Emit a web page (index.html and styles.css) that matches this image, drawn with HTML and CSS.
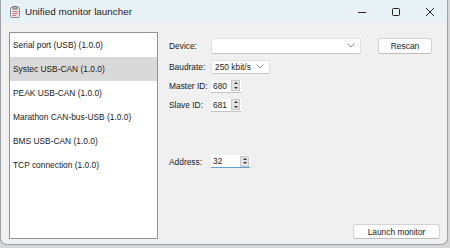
FILE: index.html
```html
<!DOCTYPE html>
<html lang="en">
<head>
  <meta charset="UTF-8" />
  <title>Unified monitor launcher</title>
  <link rel="stylesheet" href="styles.css">
</head>
<body>
  <div class="window">
    <!-- Title bar -->
    <div class="titlebar">
      <svg class="app-icon" width="10" height="12" viewBox="0 0 10 12">
        <rect x="0.5" y="1.5" width="9" height="10" rx="1" fill="#e9e4e4" stroke="#8a8a8a"/>
        <rect x="2.5" y="0.5" width="5" height="2.5" rx="0.5" fill="#b9b9b9" stroke="#777"/>
        <line x1="2.5" y1="5.5" x2="7.5" y2="5.5" stroke="#d0707a"/>
        <line x1="2.5" y1="7.5" x2="7.5" y2="7.5" stroke="#d0707a"/>
        <line x1="2.5" y1="9.5" x2="6" y2="9.5" stroke="#d0707a"/>
      </svg>
      <span class="title">Unified monitor launcher</span>
      <div class="controls">
        <span class="ctl"><svg width="10" height="10" viewBox="0 0 10 10"><line x1="1" y1="5.5" x2="9" y2="5.5" stroke="#222" stroke-width="1"/></svg></span>
        <span class="ctl"><svg width="10" height="10" viewBox="0 0 10 10"><rect x="1.5" y="1.5" width="7" height="7" rx="1" fill="none" stroke="#222"/></svg></span>
        <span class="ctl"><svg width="10" height="10" viewBox="0 0 10 10"><path d="M1 1 L9 9 M9 1 L1 9" stroke="#222" stroke-width="1"/></svg></span>
      </div>
    </div>

    <div class="client">
      <!-- Plugin list -->
      <ul class="plugin-list">
        <li>Serial port (USB) (1.0.0)</li>
        <li class="selected">Systec USB-CAN (1.0.0)</li>
        <li>PEAK USB-CAN (1.0.0)</li>
        <li>Marathon CAN-bus-USB (1.0.0)</li>
        <li>BMS USB-CAN (1.0.0)</li>
        <li>TCP connection (1.0.0)</li>
      </ul>

      <!-- Settings panel -->
      <div class="settings">
        <div class="row row-device">
          <label>Device:</label>
          <div class="combo combo-device">
            <span class="combo-text"></span>
            <svg class="chevron" width="8" height="5" viewBox="0 0 8 5"><polyline points="0.5,0.5 4,4 7.5,0.5" fill="none" stroke="#8a8a8a"/></svg>
          </div>
          <button class="btn btn-rescan">Rescan</button>
        </div>
        <div class="row row-baud">
          <label>Baudrate:</label>
          <div class="combo combo-baud">
            <span class="combo-text">250 kbit/s</span>
            <svg class="chevron" width="8" height="5" viewBox="0 0 8 5"><polyline points="0.5,0.5 4,4 7.5,0.5" fill="none" stroke="#8a8a8a"/></svg>
          </div>
        </div>
        <div class="row row-master">
          <label>Master ID:</label>
          <div class="spin spin-small">
            <span class="spin-text">680</span>
            <span class="spin-btns"><span class="up"></span><span class="down"></span></span>
          </div>
        </div>
        <div class="row row-slave">
          <label>Slave ID:</label>
          <div class="spin spin-small">
            <span class="spin-text">681</span>
            <span class="spin-btns"><span class="up"></span><span class="down"></span></span>
          </div>
        </div>
        <div class="row row-address">
          <label>Address:</label>
          <div class="spin spin-wide focused">
            <span class="spin-text">32</span>
            <span class="spin-btns"><span class="up"></span><span class="down"></span></span>
          </div>
        </div>
        <div class="actions">
          <button class="btn btn-launch">Launch monitor</button>
        </div>
      </div>
    </div>
  </div>
</body>
</html>
```

FILE: styles.css
```css
/* Desktop behind the window */
body {
  margin: 0;
  width: 450px;
  height: 248px;
  background: #d6d6d6;
  font-family: 'Liberation Sans', Arial, sans-serif;
  font-size: 8.4px;
  color: #1a1a1a;
  overflow: hidden;
}
/* Window frame */
.window {
  width: 448px;
  height: 245px;
  background: #f0f0f0;
  border: 1px solid #9da3a6;
  border-top: none;
  border-radius: 0 0 7px 7px;
  box-sizing: border-box;
  display: flex;
  flex-direction: column;
  overflow: hidden;
}
/* Title bar */
.titlebar {
  height: 23px;
  background: #e8f2f6;
  display: flex;
  align-items: center;
  flex-shrink: 0;
}
.app-icon {
  margin-left: 9px;
  margin-top: 1px;
}
.title {
  margin-left: 5px;
  font-size: 9.9px;
  color: #1c1c1c;
}
.controls {
  margin-left: auto;
  display: flex;
}
.ctl {
  width: 34px;
  height: 23px;
  display: flex;
  align-items: center;
  justify-content: center;
}
/* Main area */
.client {
  flex: 1;
  display: flex;
  padding: 9px 0 6px 8px;
}
.plugin-list {
  list-style: none;
  margin: 0;
  padding: 0;
  width: 149px;
  height: 207px;
  background: #fff;
  border: 1px solid #8f959b;
  box-sizing: border-box;
}
.plugin-list li {
  height: 24px;
  line-height: 24px;
  padding-left: 3px;
  white-space: nowrap;
}
.plugin-list li.selected {
  background: #d9d9d9;
}
/* Settings panel */
.settings {
  flex: 1;
  margin-left: 11px;
  display: flex;
  flex-direction: column;
}
.row {
  display: flex;
  align-items: center;
}
.row label {
  width: 42px;
  flex-shrink: 0;
}
.row-device {
  margin-top: 5px;
  height: 17px;
}
.row-baud {
  margin-top: 5px;
  height: 15px;
}
.row-master {
  margin-top: 5px;
  height: 14px;
}
.row-slave {
  margin-top: 5px;
  height: 14px;
}
.row-address {
  margin-top: 43px;
  height: 13px;
}
/* Combo boxes */
.combo {
  height: 15px;
  background: #fff;
  border: 1px solid #e1e1e1;
  border-bottom-color: #c4c4c4;
  border-radius: 2px;
  box-sizing: border-box;
  display: flex;
  align-items: center;
  padding: 0 5px 0 3px;
}
.combo-device {
  width: 150px;
  height: 16px;
}
.combo-baud {
  width: 59px;
  height: 14px;
}
.combo-text {
  flex: 1;
}
.chevron {
  flex-shrink: 0;
}
/* Buttons */
.btn {
  font-family: inherit;
  font-size: inherit;
  color: #1a1a1a;
  background: #fdfdfd;
  border: 1px solid #d3d3d3;
  border-bottom-color: #bcbcbc;
  border-radius: 3px;
  padding: 0;
  box-sizing: border-box;
}
.btn-rescan {
  width: 54px;
  height: 16px;
  margin-left: 17px;
}
.actions {
  margin-top: auto;
  display: flex;
  justify-content: flex-end;
  margin-right: 7px;
}
.btn-launch {
  width: 87px;
  height: 15px;
}
/* Spin boxes */
.spin {
  height: 13px;
  background: #fff;
  border-bottom: 1px solid #c4c4c4;
  box-sizing: border-box;
  display: flex;
  align-items: center;
  padding-left: 2px;
}
.spin-small {
  width: 30px;
}
.spin-wide {
  width: 39px;
  height: 13px;
}
.spin.focused {
  border-bottom: 1px solid #5f9fd8;
}
.spin-text {
  flex: 1;
}
.spin-btns {
  width: 9px;
  height: 11px;
  margin-right: 1px;
  background: #e3e3e3;
  border: 1px solid #c8c8c8;
  box-sizing: border-box;
  display: flex;
  flex-direction: column;
  align-items: center;
  justify-content: space-around;
}
.spin-btns .up {
  width: 0;
  height: 0;
  border-left: 2px solid transparent;
  border-right: 2px solid transparent;
  border-bottom: 2px solid #333;
}
.spin-btns .down {
  width: 0;
  height: 0;
  border-left: 2px solid transparent;
  border-right: 2px solid transparent;
  border-top: 2px solid #333;
}
```
